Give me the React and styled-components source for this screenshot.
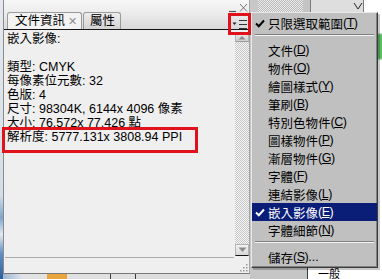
import React from "react";
import styled, { createGlobalStyle } from "styled-components";

const Global = createGlobalStyle`
  html, body { margin: 0; padding: 0; background: #b8b8b8; }
  body { font-family: "Liberation Sans", "Noto Sans CJK TC", sans-serif; }
`;

const FONT = `"Liberation Sans", "Noto Sans CJK TC", sans-serif`;

const Page = styled.div`
  position: relative;
  width: 382px;
  height: 279px;
  overflow: hidden;
  display: flex;
  font-family: ${FONT};
  font-size: 12.5px;
  color: #000;
`;

const DesktopEdge = styled.div`
  width: 3px;
  flex: none;
  background: linear-gradient(
    180deg,
    #e4e9ef 0%,
    #d4dde7 70%,
    #7ea6cf 78%,
    #e4e9ef 84%,
    #5d8fc4 91%,
    #2f5f99 100%
  );
`;

const LeftColumn = styled.div`
  width: 247px;
  flex: none;
  display: flex;
  flex-direction: column;
`;

const Panel = styled.div`
  height: 274px;
  flex: none;
  box-sizing: border-box;
  border-left: 1px solid #8c8c8c;
  border-right: 1px solid #a4a4a4;
  border-bottom: 1px solid #7a7a7a;
  background: #efefef;
  display: flex;
  flex-direction: column;
`;

const Header = styled.div`
  height: 30px;
  flex: none;
  box-sizing: border-box;
  border-bottom: 1px solid #151515;
  background: linear-gradient(180deg, #f7f7f7 0%, #ececec 45%, #d9d9d9 100%);
  display: flex;
  align-items: flex-end;
`;

const TabRow = styled.div`
  display: flex;
  gap: 1px;
  margin-left: 3px;
`;

const Tab = styled.div`
  height: 17px;
  box-sizing: border-box;
  border: 1px solid #9a9a9a;
  border-bottom: none;
  border-radius: 3px 3px 0 0;
  padding: ${(p) => (p.$active ? "0 4px 0 7px" : "0 5px 0 6px")};
  background: ${(p) =>
    p.$active
      ? "#f3f3f3"
      : "linear-gradient(180deg, #ededed 0%, #d3d3d3 100%)"};
  display: flex;
  align-items: center;
  gap: 3px;
  line-height: 16px;
  white-space: nowrap;
`;

const TabClose = styled.span`
  color: #8c8c8c;
  font-size: 11px;
  line-height: 16px;
`;

const HeaderRight = styled.div`
  margin-left: auto;
  width: 20px;
  align-self: stretch;
  display: flex;
  flex-direction: column;
`;

const Body = styled.div`
  flex: 1;
  display: flex;
  min-height: 0;
`;

const Content = styled.div`
  flex: 1;
  padding: 2px 0 0 3px;
  line-height: 14px;
  white-space: nowrap;
  overflow: hidden;
`;

const Line = styled.div`
  height: 14px;
`;

const Scrollbar = styled.div`
  width: 14px;
  flex: none;
  display: flex;
  flex-direction: column;
  padding: 3px 0 1px;
  box-sizing: border-box;
`;

const ScrollButton = styled.div`
  height: ${(p) => (p.$down ? "12px" : "9px")};
  flex: none;
  box-sizing: border-box;
  display: flex;
  align-items: center;
  justify-content: center;
  background: ${(p) =>
    p.$down
      ? "linear-gradient(180deg, #f2f2f2, #d8d8d8)"
      : "linear-gradient(180deg, #e8e8e8, #cfcfcf)"};
  border: 1px solid #b4b4b4;
  border-bottom: ${(p) => (p.$down ? "1px solid #151515" : "1px solid #9a9a9a")};
`;

const Track = styled.div`
  flex: 1;
  background: repeating-conic-gradient(#c6c6c6 0% 25%, #f6f6f6 0% 50%) 0 0 / 2px 2px;
`;

const Footer = styled.div`
  height: 16px;
  flex: none;
  display: flex;
  flex-direction: column;
`;

const Rule = styled.div`
  height: 1px;
  margin: 0 15px 0 1px;
  background: #a9a9a9;
`;

const FooterBody = styled.div`
  flex: 1;
  display: flex;
  justify-content: flex-end;
  align-items: flex-end;
  padding: 0 1px 1px 0;
`;

const BottomStrip = styled.div`
  flex: 1;
  display: flex;
  background: #dcdcdc;
`;

const StripPiece = styled.div`
  width: ${(p) => p.$w}px;
  flex: none;
  background: ${(p) => p.$bg};
  border-right: ${(p) => (p.$line ? "1px solid #3a3a3a" : "none")};
`;

const BackWindow = styled.div`
  flex: 1;
  display: flex;
  flex-direction: column;
  background: #cfcfcf;
`;

const BackTop = styled.div`
  height: 12px;
  flex: none;
  display: flex;
`;

const BackCell = styled.div`
  width: ${(p) => (p.$w ? `${p.$w}px` : "auto")};
  flex: ${(p) => (p.$w ? "none" : "1")};
  background: ${(p) => p.$bg};
  border-left: ${(p) => (p.$line ? "1px solid #7c7c7c" : "none")};
  display: flex;
  justify-content: flex-end;
  align-items: flex-start;
`;

const BackMiddle = styled.div`
  flex: 1;
  display: flex;
`;

const BackEdge = styled.div`
  width: 4px;
  flex: none;
  background: linear-gradient(180deg, #ffffff 0%, #ffffff 8%, #5dbb63 9%, #5dbb63 18%, #ffffff 19%, #ffffff 100%);
  border-left: 1px solid #6e6e6e;
`;

const BackBottom = styled.div`
  height: 11px;
  flex: none;
  display: flex;
`;

const Field = styled.div`
  flex: 1;
  background: #ffffff;
  border-left: 1px solid #3c3c3c;
  padding-left: 10px;
  font-size: 11px;
  line-height: 12px;
  white-space: nowrap;
`;

const RedBox = styled.div`
  position: absolute;
  left: ${(p) => p.$x}px;
  top: ${(p) => p.$y}px;
  width: ${(p) => p.$w}px;
  height: ${(p) => p.$h}px;
  box-sizing: border-box;
  border: 3px solid #e0121b;
  pointer-events: none;
`;

const Menu = styled.div`
  position: absolute;
  left: 251px;
  top: 12px;
  width: 127px;
  box-sizing: border-box;
  background: #c0c0c0;
  border: 1px solid;
  border-color: #e8e8e8 #3c3c3c #3c3c3c #e8e8e8;
  box-shadow: inset -1px -1px 0 #808080, 2px 2px 0 rgba(0, 0, 0, 0.22);
  padding: 1px 0 1px;
  font-size: 12.5px;
`;

const MenuItem = styled.div`
  position: relative;
  height: 18px;
  display: flex;
  align-items: center;
  padding-left: 16px;
  white-space: nowrap;
  background: ${(p) => (p.$active ? "#0a1e78" : "transparent")};
  color: ${(p) => (p.$active ? "#ffffff" : "#000000")};
`;

const Check = styled.svg`
  position: absolute;
  left: 3px;
  top: 5px;
`;

const Mnemonic = styled.span`
  letter-spacing: -0.5px;
  u {
    text-decoration: underline;
    text-underline-offset: 1px;
  }
`;

const Separator = styled.div`
  height: 9px;
  box-sizing: border-box;
  padding-top: 2px;
  margin: 0 3px;
  &::before {
    content: "";
    display: block;
    height: 1px;
    background: #808080;
    border-bottom: 1px solid #f4f4f4;
  }
`;

const menuItems = [
  { label: "只限選取範圍", key: "T", checked: true },
  "sep",
  { label: "文件", key: "D" },
  { label: "物件", key: "O" },
  { label: "繪圖樣式", key: "Y" },
  { label: "筆刷", key: "B" },
  { label: "特別色物件", key: "C" },
  { label: "圖樣物件", key: "P" },
  { label: "漸層物件", key: "G" },
  { label: "字體", key: "F" },
  { label: "連結影像", key: "L" },
  { label: "嵌入影像", key: "E", checked: true, active: true },
  { label: "字體細節", key: "N" },
  "sep",
  { label: "儲存", key: "S", suffix: "..." },
];

const lines = [
  "嵌入影像:",
  "",
  "類型: CMYK",
  "每像素位元數: 32",
  "色版: 4",
  "尺寸: 98304K, 6144x 4096 像素",
  "大小: 76.572x 77.426 點",
  "解析度: 5777.131x 3808.94 PPI",
];

function CheckMark({ color }) {
  return (
    <Check width="10" height="9" viewBox="0 0 10 9">
      <path d="M1 4.5 L3.8 7.2 L9 1.5" fill="none" stroke={color} strokeWidth="2" />
    </Check>
  );
}

function ResizeGrip() {
  const dots = [
    [6, 0], [6, 3], [3, 3], [6, 6], [3, 6], [0, 6],
  ];
  return (
    <svg width="8" height="8" viewBox="0 0 8 8">
      {dots.map(([x, y], i) => (
        <rect key={i} x={x} y={y} width="1.5" height="1.5" fill="#9a9a9a" />
      ))}
    </svg>
  );
}

export default function App() {
  return (
    <>
      <Global />
      <Page>
        <DesktopEdge />
        <LeftColumn>
          <Panel>
            <Header>
              <TabRow>
                <Tab $active>
                  文件資訊<TabClose>✕</TabClose>
                </Tab>
                <Tab>屬性</Tab>
              </TabRow>
              <HeaderRight>
                <svg width="20" height="14" viewBox="0 0 20 14">
                  <path d="M0 11.5 H7" stroke="#555" strokeWidth="1.2" />
                  <path d="M11 4 L18 11.5 M18 4 L11 11.5" stroke="#777" strokeWidth="1" />
                </svg>
                <svg width="20" height="15" viewBox="0 0 20 15">
                  <path d="M3.5 8.5 H7.5 L5.5 11 Z" fill="#222" />
                  <path d="M10 6.5 H18 M10 10.5 H18 M10 14.5 H18" stroke="#333" strokeWidth="1" />
                </svg>
              </HeaderRight>
            </Header>
            <Body>
              <Content>
                {lines.map((t, i) => (
                  <Line key={i}>{t}</Line>
                ))}
              </Content>
              <Scrollbar>
                <ScrollButton>
                  <svg width="8" height="5" viewBox="0 0 8 5">
                    <path d="M0.5 4.5 L4 1 L7.5 4.5 Z" fill="#8a8a8a" />
                  </svg>
                </ScrollButton>
                <Track />
                <ScrollButton $down>
                  <svg width="9" height="6" viewBox="0 0 9 6">
                    <path d="M0.5 0.5 L8.5 0.5 L4.5 5 Z" fill="#8c8c8c" />
                  </svg>
                </ScrollButton>
              </Scrollbar>
            </Body>
            <Footer>
              <Rule />
              <FooterBody>
                <ResizeGrip />
              </FooterBody>
            </Footer>
          </Panel>
          <BottomStrip>
            <StripPiece $w={20} $bg="linear-gradient(90deg, #9fb6cf, #dfe6ee)" />
            <StripPiece $w={24} $bg="#e2e2e2" />
            <StripPiece $w={20} $bg="#e8a53e" />
            <StripPiece $w={43} $bg="#e0e0e0" $line />
            <StripPiece $w={24} $bg="#e0e0e0" $line />
          </BottomStrip>
        </LeftColumn>
        <BackWindow>
          <BackTop>
            <BackCell $w={8} $bg="#c8c8c8" />
            <BackCell
              $w={45}
              $bg="repeating-conic-gradient(#b8b8b8 0% 25%, #ececec 0% 50%) 0 0 / 2px 2px"
            />
            <BackCell $w={7} $bg="#c4c4c4" />
            <BackCell $w={52} $bg="#dedede" $line>
              <svg width="10" height="10" viewBox="0 0 10 10">
                <path d="M1 3 L5 9 L9 3" fill="none" stroke="#222" strokeWidth="1" />
              </svg>
            </BackCell>
            <BackCell $bg="#ffffff" $line />
          </BackTop>
          <BackMiddle>
            <BackCell $bg="#c8c8c8" />
            <BackEdge />
          </BackMiddle>
          <BackBottom>
            <BackCell $w={57} $bg="#c6c6c6" />
            <Field>一般</Field>
          </BackBottom>
        </BackWindow>

        <Menu>
          {menuItems.map((it, i) =>
            it === "sep" ? (
              <Separator key={i} />
            ) : (
              <MenuItem key={i} $active={it.active}>
                {it.checked && <CheckMark color={it.active ? "#ffffff" : "#000000"} />}
                {it.label}
                <Mnemonic>
                  (<u>{it.key}</u>)
                </Mnemonic>
                {it.suffix}
              </MenuItem>
            )
          )}
        </Menu>

        <RedBox $x={228} $y={13} $w={23} $h={22} />
        <RedBox $x={2} $y={127} $w={196} $h={26} />
      </Page>
    </>
  );
}
